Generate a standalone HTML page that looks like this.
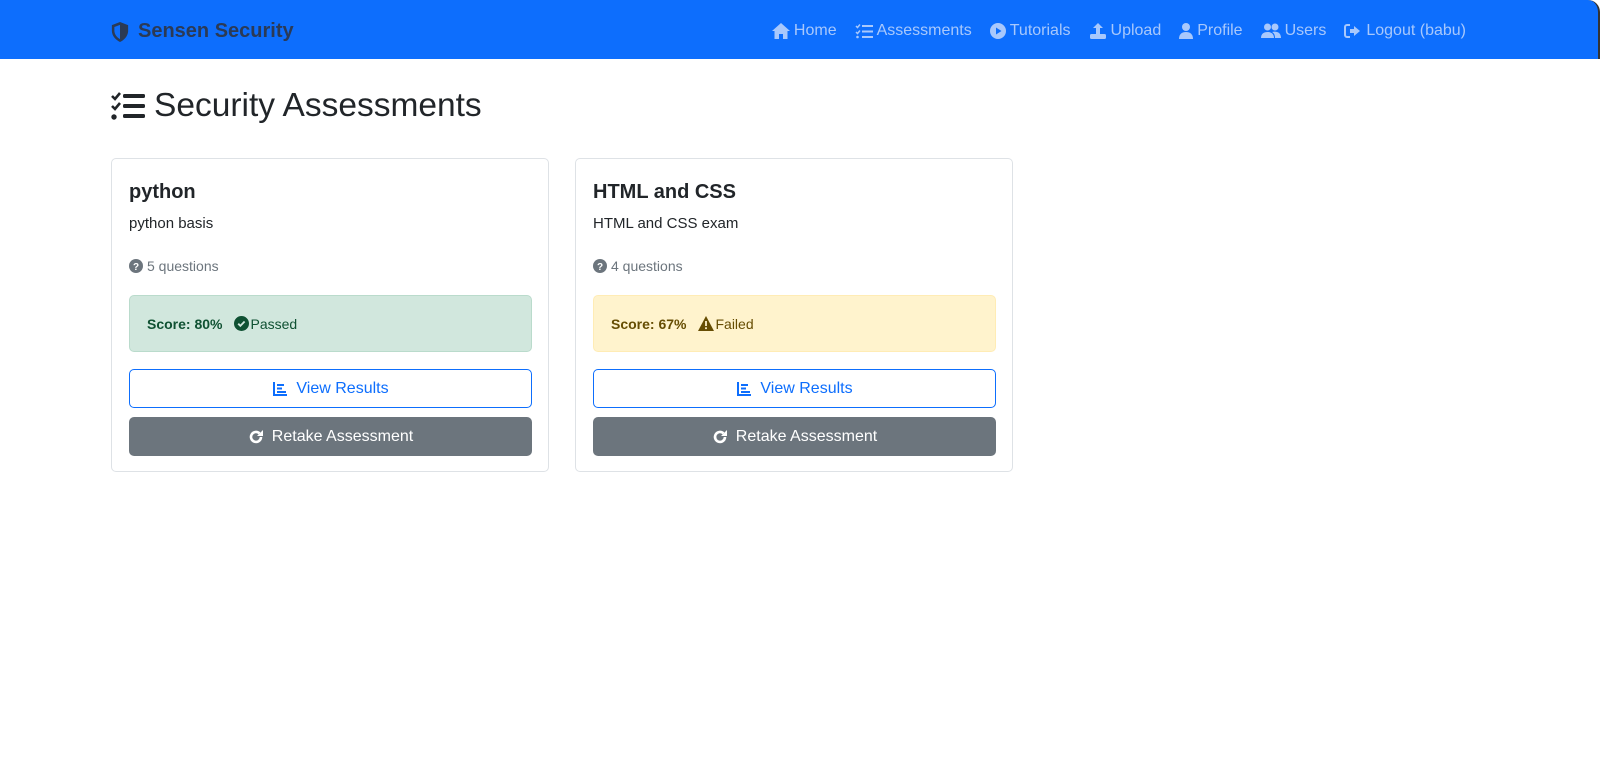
<!DOCTYPE html>
<html><head><meta charset="utf-8"><style>
*{box-sizing:border-box;margin:0;padding:0}
body{width:1600px;height:768px;background:#fff;font-family:"Liberation Sans",sans-serif;color:#212529;position:relative;overflow:hidden}
.nav{position:absolute;left:0;top:0;width:1600px;height:59px;background:#0d6efd;border-top-right-radius:12px;border-right:2px solid #333}
.brand{position:absolute;left:110px;top:20px;font-size:20px;font-weight:bold;color:#2b3a55;display:flex;align-items:center;gap:8px}
.links{position:absolute;right:132px;top:22px;display:flex;gap:18px;font-size:16px;color:#a8c8fc}
.links span{display:flex;align-items:center;gap:4px}
.links svg{fill:#a8c8fc}
h1{position:absolute;left:110px;top:87px;font-size:33.5px;font-weight:500;display:flex;align-items:center;gap:8px}
.card{position:absolute;top:158px;width:438px;height:314px;border:1px solid #dee2e6;border-radius:5px}
.t{position:absolute;left:17px;top:22px;font-size:20px;font-weight:bold}
.d{position:absolute;left:17px;top:56px;font-size:15px}
.q{position:absolute;left:17px;top:99px;font-size:14px;color:#6c757d;display:flex;align-items:center;gap:4px}
.al{position:absolute;left:17px;top:136px;width:403px;height:57px;border-radius:5px;border:1px solid;font-size:14px;display:flex;align-items:center;padding-left:17px}
.al b{margin-right:12px}
.ok{background:#d1e7dd;border-color:#badbcc;color:#0f5132}
.warn{background:#fff3cd;border-color:#ffecb5;color:#664d03}
.b1{position:absolute;left:17px;top:210px;width:403px;height:39px;border:1px solid #0d6efd;border-radius:5px;color:#0d6efd;font-size:16px;display:flex;align-items:center;justify-content:center;gap:8px}
.b2{position:absolute;left:17px;top:258px;width:403px;height:39px;background:#6c757d;border-radius:5px;color:#fff;font-size:16px;display:flex;align-items:center;justify-content:center;gap:8px}
</style></head><body>
<div class="nav">
<div class="brand"><svg width="20" height="20" viewBox="0 0 16 16"><path fill="#2b3a55" d="M8 0 1.5 2.5V7c0 4 3 7.3 6.5 9 3.5-1.7 6.5-5 6.5-9V2.5Z"/><path fill="#0d6efd" d="M8 2.3 3.5 4v3c0 2.8 2 5.3 4.5 6.7Z"/></svg>Sensen Security</div>
<div class="links">
<span><svg width="18" height="16" viewBox="0 0 18 16"><path d="M9 0 0 8h2.5v8h4.5v-5h4v5h4.5V8H18Z"/></svg>Home</span>
<span><svg width="18" height="16" viewBox="0 0 18 16"><path d="M1 3l1.5 1.5L5 1.5" stroke="#a8c8fc" stroke-width="1.5" fill="none"/><path d="M1 9l1.5 1.5L5 7.5" stroke="#a8c8fc" stroke-width="1.5" fill="none"/><circle cx="2.5" cy="14" r="1.3"/><rect x="7" y="2" width="11" height="2"/><rect x="7" y="7.5" width="11" height="2"/><rect x="7" y="13" width="11" height="2"/></svg>Assessments</span>
<span><svg width="16" height="16" viewBox="0 0 16 16"><circle cx="8" cy="8" r="8"/><path fill="#0d6efd" d="M6 4.5v7l5.5-3.5Z"/></svg>Tutorials</span>
<span><svg width="18" height="16" viewBox="0 0 18 16"><path d="M9 0 4 5h3v6h4V5h3Z"/><rect x="1" y="11" width="16" height="5" rx="1.5"/></svg>Upload</span>
<span><svg width="14" height="16" viewBox="0 0 14 16"><circle cx="7" cy="4" r="4"/><path d="M0 16c0-5 3-7 7-7s7 2 7 7Z"/></svg>Profile</span>
<span><svg width="20" height="16" viewBox="0 0 20 16"><circle cx="6.5" cy="4" r="3.5"/><circle cx="14" cy="4" r="3.5"/><path d="M0 15c0-4 2.5-6 6.5-6s6.5 2 6.5 6Z"/><path d="M11 9c4-1 9 0 9 6h-6c0-3-1-5-3-6Z"/></svg>Users</span>
<span><svg width="18" height="16" viewBox="0 0 18 16"><path d="M6 2H3a2 2 0 0 0-2 2v8a2 2 0 0 0 2 2h3" stroke="#a8c8fc" stroke-width="2" fill="none"/><path d="M10 3v3H6v4h4v3l6-5Z"/></svg>Logout (babu)</span>
</div></div>
<h1><svg width="36" height="30" viewBox="0 0 36 30"><path d="M2 5l3 3 5-6" stroke="#212529" stroke-width="2.6" fill="none"/><path d="M2 15l3 3 5-6" stroke="#212529" stroke-width="2.6" fill="none"/><circle cx="4" cy="26" r="2.7" fill="#212529"/><rect x="13" y="3" width="22" height="4" rx="1.5" fill="#212529"/><rect x="13" y="13" width="22" height="4" rx="1.5" fill="#212529"/><rect x="13" y="23" width="22" height="4" rx="1.5" fill="#212529"/></svg>Security Assessments</h1>

<div class="card" style="left:111px">
<div class="t">python</div><div class="d">python basis</div>
<div class="q"><svg width="14" height="14" viewBox="0 0 14 14"><circle cx="7" cy="7" r="7" fill="#6c757d"/><text x="7" y="11" font-size="10" font-weight="bold" fill="#fff" text-anchor="middle" font-family="Liberation Sans">?</text></svg>5 questions</div>
<div class="al ok"><b>Score: 80%</b><svg width="15" height="15" viewBox="0 0 16 16" style="margin-right:1px"><circle cx="8" cy="8" r="8" fill="#0f5132"/><path d="M4.5 8.2l2.3 2.3 4.5-4.6" stroke="#d1e7dd" stroke-width="2" fill="none"/></svg>Passed</div>
<div class="b1"><svg width="16" height="16" viewBox="0 0 16 16"><path fill="#0d6efd" d="M1 1h2v12h12v2H1Z"/><rect x="5" y="3" width="7" height="2" fill="#0d6efd"/><rect x="5" y="6.5" width="5" height="2" fill="#0d6efd"/><rect x="5" y="10" width="9" height="2" fill="#0d6efd"/></svg>View Results</div>
<div class="b2"><svg width="16" height="16" viewBox="0 0 16 16"><path d="M13 8a5 5 0 1 1-1.5-3.6" stroke="#fff" stroke-width="2.6" fill="none"/><path fill="#fff" d="M15 1v6H9Z"/></svg>Retake Assessment</div>
</div>

<div class="card" style="left:575px">
<div class="t">HTML and CSS</div><div class="d">HTML and CSS exam</div>
<div class="q"><svg width="14" height="14" viewBox="0 0 14 14"><circle cx="7" cy="7" r="7" fill="#6c757d"/><text x="7" y="11" font-size="10" font-weight="bold" fill="#fff" text-anchor="middle" font-family="Liberation Sans">?</text></svg>4 questions</div>
<div class="al warn"><b>Score: 67%</b><svg width="16" height="15" viewBox="0 0 16 15" style="margin-right:1px"><path d="M8 0 16 15H0Z" fill="#664d03"/><rect x="7.1" y="5" width="1.8" height="5" fill="#fff3cd"/><rect x="7.1" y="11.3" width="1.8" height="1.8" fill="#fff3cd"/></svg>Failed</div>
<div class="b1"><svg width="16" height="16" viewBox="0 0 16 16"><path fill="#0d6efd" d="M1 1h2v12h12v2H1Z"/><rect x="5" y="3" width="7" height="2" fill="#0d6efd"/><rect x="5" y="6.5" width="5" height="2" fill="#0d6efd"/><rect x="5" y="10" width="9" height="2" fill="#0d6efd"/></svg>View Results</div>
<div class="b2"><svg width="16" height="16" viewBox="0 0 16 16"><path d="M13 8a5 5 0 1 1-1.5-3.6" stroke="#fff" stroke-width="2.6" fill="none"/><path fill="#fff" d="M15 1v6H9Z"/></svg>Retake Assessment</div>
</div>
</body></html>
